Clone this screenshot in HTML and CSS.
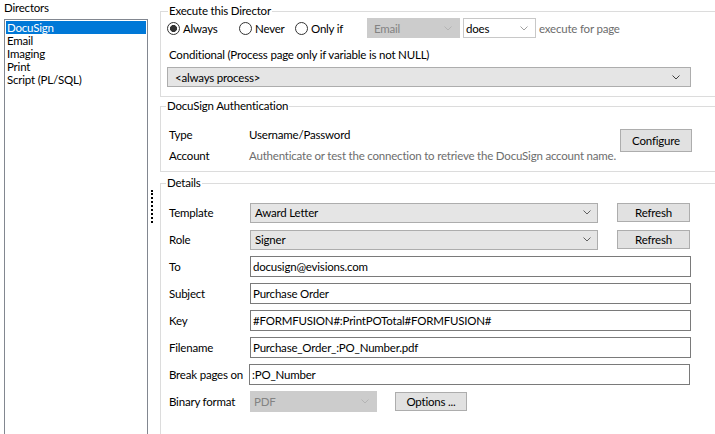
FILE: index.html
```html
<!DOCTYPE html>
<html lang="en">
<head>
<meta charset="utf-8">
<title>Directors</title>
<link rel="stylesheet" href="styles.css">
</head>
<body>
<div class="app">
  <aside class="directors">
    <div class="dir-title">Directors</div>
    <ul class="listbox">
      <li class="item is-selected">DocuSign</li>
      <li class="item">Email</li>
      <li class="item">Imaging</li>
      <li class="item">Print</li>
      <li class="item">Script (PL/SQL)</li>
    </ul>
  </aside>
  <div class="splitter"><span class="grip"></span></div>
  <main class="panel">
    <fieldset class="group group-exec">
      <legend class="group-title title-exec">Execute this Director</legend>
      <div class="radio-row">
        <label class="radio radio-always"><span class="radio-dot is-checked"></span>Always</label>
        <label class="radio radio-never"><span class="radio-dot"></span>Never</label>
        <label class="radio radio-only"><span class="radio-dot"></span>Only if</label>
        <div class="combo combo-disabled combo-email"><span>Email</span><svg class="chev" width="8" height="5" viewBox="0 0 8 5"><polyline points="0.5,0.5 4,4 7.5,0.5" fill="none" stroke="#b4b4b4" stroke-width="1"/></svg></div>
        <div class="combo combo-does"><span>does</span><svg class="chev" width="8" height="5" viewBox="0 0 8 5"><polyline points="0.5,0.5 4,4 7.5,0.5" fill="none" stroke="#a0a0a0" stroke-width="1"/></svg></div>
        <span class="hint">execute for page</span>
      </div>
      <div class="field-label">Conditional (Process page only if variable is not NULL)</div>
      <div class="combo combo-wide"><span>&lt;always process&gt;</span><svg class="chev" width="8" height="5" viewBox="0 0 8 5"><polyline points="0.5,0.5 4,4 7.5,0.5" fill="none" stroke="#404040" stroke-width="1"/></svg></div>
    </fieldset>

    <fieldset class="group group-auth">
      <legend class="group-title">DocuSign Authentication</legend>
      <div class="auth-body">
        <div class="auth-grid">
          <span>Type</span><span>Username/Password</span>
          <span>Account</span><span class="hint-text">Authenticate or test the connection to retrieve the DocuSign account name.</span>
        </div>
        <button class="btn btn-configure" type="button">Configure</button>
      </div>
    </fieldset>

    <fieldset class="group group-details">
      <legend class="group-title">Details</legend>
      <div class="row">
        <span class="row-label">Template</span>
        <div class="combo combo-field"><span>Award Letter</span><svg class="chev" width="8" height="5" viewBox="0 0 8 5"><polyline points="0.5,0.5 4,4 7.5,0.5" fill="none" stroke="#606060" stroke-width="1"/></svg></div>
        <button class="btn btn-refresh" type="button">Refresh</button>
      </div>
      <div class="row">
        <span class="row-label">Role</span>
        <div class="combo combo-field"><span>Signer</span><svg class="chev" width="8" height="5" viewBox="0 0 8 5"><polyline points="0.5,0.5 4,4 7.5,0.5" fill="none" stroke="#606060" stroke-width="1"/></svg></div>
        <button class="btn btn-refresh" type="button">Refresh</button>
      </div>
      <div class="row">
        <span class="row-label">To</span>
        <input class="textbox" type="text" value="docusign@evisions.com">
      </div>
      <div class="row">
        <span class="row-label">Subject</span>
        <input class="textbox" type="text" value="Purchase Order">
      </div>
      <div class="row">
        <span class="row-label">Key</span>
        <input class="textbox" type="text" value="#FORMFUSION#:PrintPOTotal#FORMFUSION#">
      </div>
      <div class="row">
        <span class="row-label">Filename</span>
        <input class="textbox" type="text" value="Purchase_Order_:PO_Number.pdf">
      </div>
      <div class="row">
        <span class="row-label label-break">Break pages on</span>
        <input class="textbox textbox-break" type="text" value=":PO_Number">
      </div>
      <div class="row">
        <span class="row-label">Binary format</span>
        <div class="combo combo-disabled combo-binary"><span>PDF</span><svg class="chev" width="8" height="5" viewBox="0 0 8 5"><polyline points="0.5,0.5 4,4 7.5,0.5" fill="none" stroke="#b4b4b4" stroke-width="1"/></svg></div>
        <button class="btn btn-options" type="button">Options ...</button>
      </div>
    </fieldset>
  </main>
</div>
</body>
</html>
```

FILE: styles.css
```css
html, body {
  margin: 0;
  padding: 0;
  background: #ffffff;
}
body {
  font-family: Lato, "Noto Sans", sans-serif;
  font-size: 11.5px;
  letter-spacing: -0.2px;
  color: #000000;
  width: 715px;
  height: 434px;
  overflow: hidden;
}
.app {
  display: flex;
  height: 434px;
  overflow: hidden;
}

/* Left list */
.directors {
  width: 148px;
  flex: none;
  display: flex;
  flex-direction: column;
}
.dir-title {
  height: 19px;
  box-sizing: border-box;
  padding-left: 4px;
  line-height: 16px;
}
.listbox {
  flex: 1;
  margin: 0 0 0 4px;
  padding: 1px;
  list-style: none;
  border: 1px solid #828790;
  border-bottom: none;
}
.item {
  height: 13px;
  line-height: 13px;
  padding-left: 1px;
  white-space: nowrap;
  overflow: hidden;
}
.is-selected {
  background: #0078d7;
  color: #ffffff;
}

/* Splitter */
.splitter {
  width: 12px;
  flex: none;
  box-sizing: border-box;
  padding: 190px 0 0 3px;
}
.grip {
  display: block;
  width: 0;
  height: 33px;
  border-left: 2px dotted #000000;
}

/* Right panel */
.panel {
  flex: 1;
  min-width: 0;
  margin-right: -20px;
  padding-top: 4px;
}
.group {
  margin: 0;
  min-width: 0;
  border: 1px solid #dcdcdc;
  padding: 0 0 0 6px;
}
.group-title {
  padding: 0 1px;
  margin-left: -1px;
  line-height: 14px;
}
.title-exec {
  margin-left: 1px;
}

/* Execute */
.group-exec {
  padding-bottom: 9px;
}
.radio-row {
  display: flex;
  align-items: center;
  height: 20px;
  white-space: nowrap;
}
.radio {
  display: flex;
  align-items: center;
  gap: 3px;
  flex: none;
}
.radio-always { width: 72px; }
.radio-never { width: 56px; }
.radio-only { width: 72px; }
.radio-dot {
  width: 13px;
  height: 13px;
  box-sizing: border-box;
  border: 1px solid #333333;
  border-radius: 50%;
  flex: none;
}
.radio-dot.is-checked {
  background: radial-gradient(circle, #333333 0 3.2px, #ffffff 3.8px);
}
.combo {
  display: flex;
  align-items: center;
  justify-content: space-between;
  height: 20px;
  box-sizing: border-box;
  border: 1px solid #adadad;
  background: #e5e5e5;
  padding: 0 7px 0 4px;
  flex: none;
  white-space: nowrap;
}
.chev {
  display: block;
  flex: none;
}
.combo-disabled {
  background: #cccccc;
  border-color: #cccccc;
  color: #838383;
}
.combo-email {
  width: 93px;
  padding-left: 6px;
}
.combo-does {
  width: 73px;
  margin-left: 3px;
  background: #ffffff;
  border-color: #c8c8c8;
  padding-left: 2px;
}
.hint {
  color: #6d6d6d;
  margin-left: 3px;
}
.field-label {
  margin-top: 10px;
  line-height: 14px;
  padding-left: 2px;
}
.combo-wide {
  width: 524px;
  margin-top: 5px;
  padding: 0 10px 0 7px;
}

/* Auth */
.group-auth {
  margin-top: 2px;
  padding-top: 15px;
  padding-bottom: 8px;
}
.auth-body {
  display: flex;
  align-items: flex-start;
}
.auth-grid {
  width: 451px;
  flex: none;
  padding-left: 2px;
  display: grid;
  grid-template-columns: 80px auto;
  row-gap: 7px;
  line-height: 14px;
  white-space: nowrap;
}
.hint-text {
  color: #6d6d6d;
}
.btn {
  font: inherit;
  letter-spacing: inherit;
  color: #000000;
  background: #e1e1e1;
  border: 1px solid #adadad;
  border-radius: 0;
  padding: 0;
  margin: 0;
  box-sizing: border-box;
  flex: none;
}
.btn-configure {
  width: 72px;
  height: 23px;
  margin-top: 1px;
}

/* Details */
.group-details {
  margin-top: 4px;
  padding-top: 12px;
  padding-bottom: 40px;
}
.row {
  display: flex;
  align-items: center;
  height: 21px;
  margin-bottom: 6px;
}
.row-label {
  width: 83px;
  box-sizing: border-box;
  padding-left: 2px;
  flex: none;
  white-space: nowrap;
}
.label-break {
  width: 82px;
}
.combo-field {
  width: 348px;
  height: 20px;
  padding: 0 6px 0 4px;
}
.btn-refresh {
  width: 73px;
  height: 19px;
  margin-left: 19px;
}
.textbox {
  font: inherit;
  letter-spacing: inherit;
  color: #000000;
  width: 441px;
  height: 21px;
  box-sizing: border-box;
  border: 1px solid #7a7a7a;
  border-radius: 0;
  padding: 0 2px;
  margin: 0;
  background: #ffffff;
  outline: none;
}
.textbox-break {
  width: 441px;
}
.combo-binary {
  width: 127px;
  height: 21px;
  padding: 0 7px 0 3px;
}
.btn-options {
  width: 72px;
  height: 19px;
  margin-left: 18px;
}
```
